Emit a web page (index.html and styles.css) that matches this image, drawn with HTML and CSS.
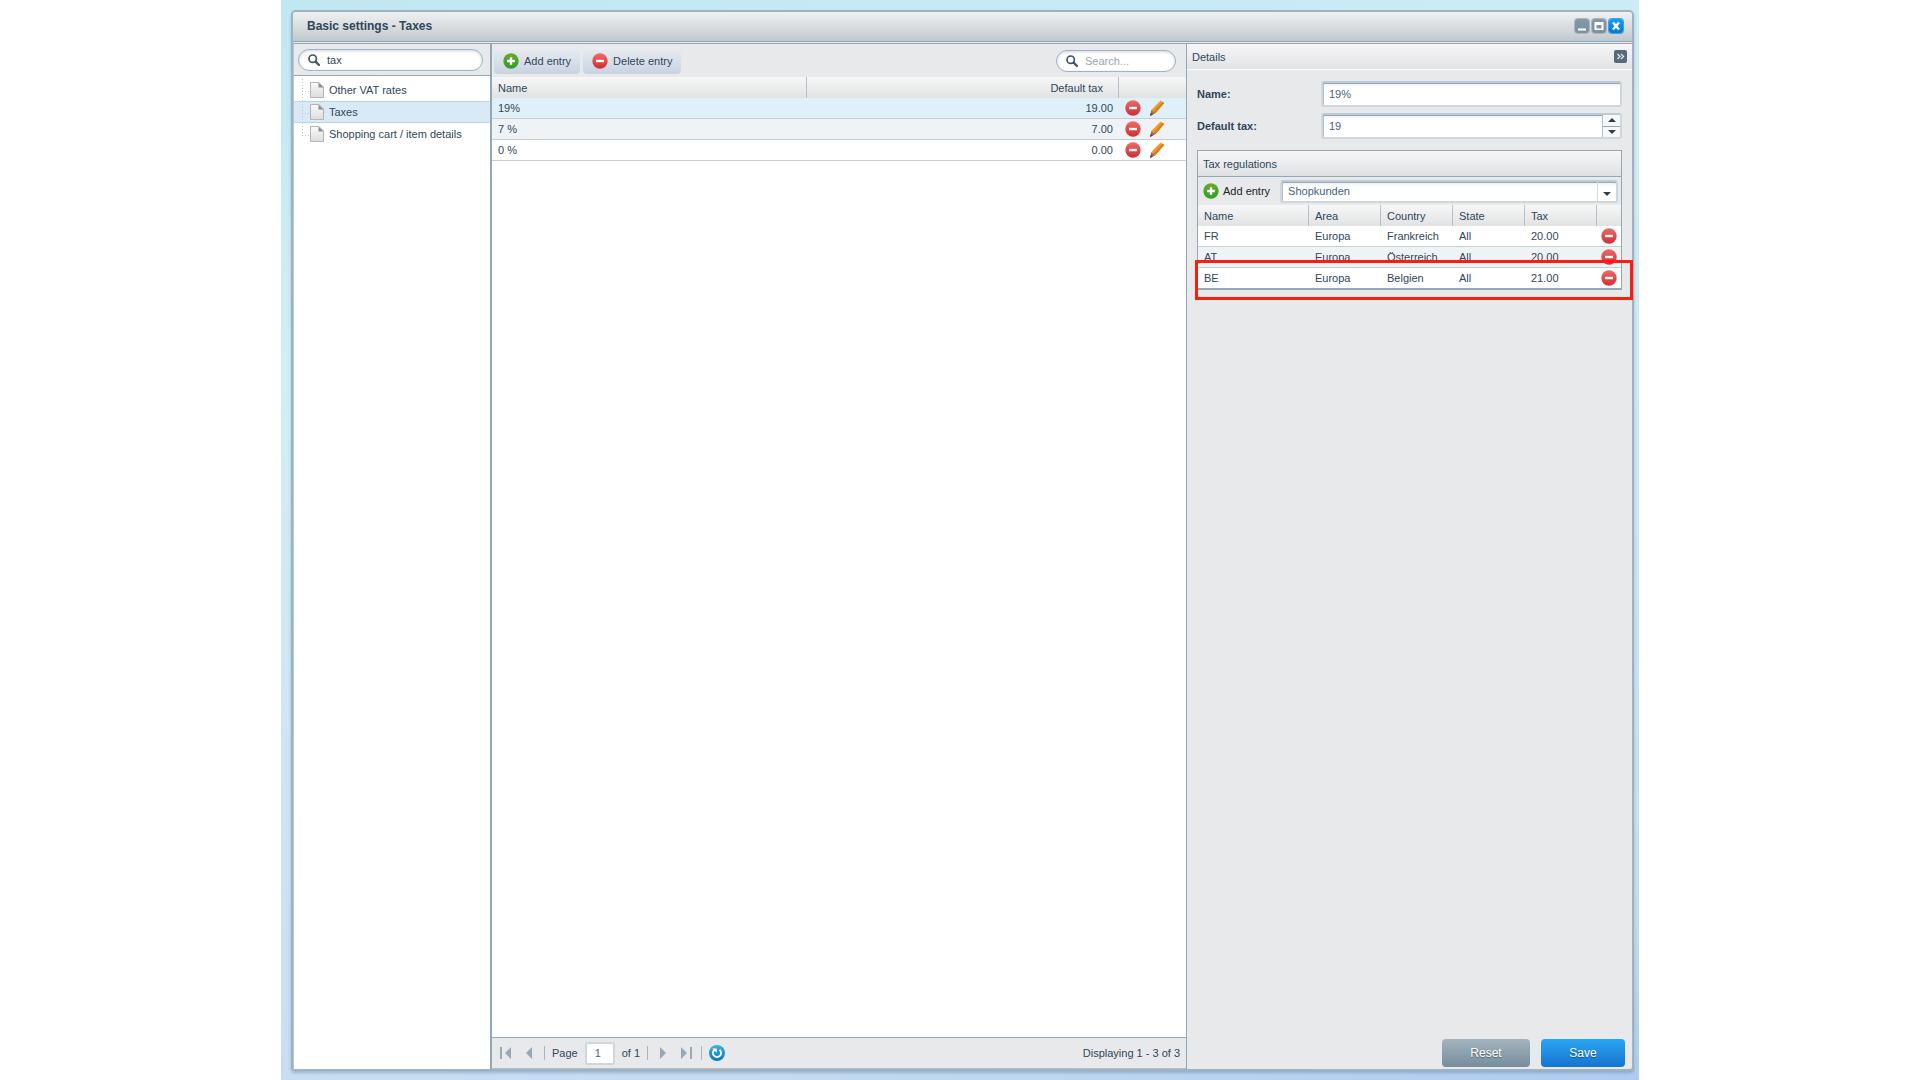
FILE: index.html
```
<!DOCTYPE html>
<html lang="en">
<head>
<meta charset="utf-8">
<title>Basic settings - Taxes</title>
<link rel="stylesheet" href="styles.css">
</head>
<body>
<svg class="defs" width="0" height="0" aria-hidden="true">
  <defs>
    <linearGradient id="g-green" x1="0" y1="0" x2="0" y2="1"><stop offset="0" stop-color="#6cab25"/><stop offset="1" stop-color="#2f9e2c"/></linearGradient>
    <linearGradient id="g-red" x1="0" y1="0" x2="0" y2="1"><stop offset="0" stop-color="#ef6a68"/><stop offset="1" stop-color="#cf2e33"/></linearGradient>
    <linearGradient id="g-page" x1="0" y1="0" x2="0" y2="1"><stop offset="0" stop-color="#fafafa"/><stop offset="1" stop-color="#dcdcdc"/></linearGradient>
    <linearGradient id="g-blue" x1="0" y1="0" x2="0" y2="1"><stop offset="0" stop-color="#3bb0e8"/><stop offset="1" stop-color="#0a76c0"/></linearGradient>
    <symbol id="i-plus" viewBox="0 0 16 16"><circle cx="8" cy="8" r="7.7" fill="url(#g-green)"/><path d="M8 4.2v7.600M4.200 8h7.600" stroke="#fff" stroke-width="2.400"/></symbol>
    <symbol id="i-minus" viewBox="0 0 16 16"><circle cx="8" cy="8" r="7.700" fill="url(#g-red)"/><path d="M4 8h8" stroke="#fff" stroke-width="2.400"/></symbol>
    <symbol id="i-pencil" viewBox="0 0 16 16"><path d="M11.600 .4 15.200 3 6.400 13.200 2.300 10.100z" fill="#ee9d2c"/><path d="M13.600 1.800 15.200 3 6.400 13.200 4.400 11.700z" fill="#d97f17"/><path d="M2.300 10.100 6.400 13.200 1 16z" fill="#a8694a"/><path d="M1.700 13 4 14.500 1 16z" fill="#5c3a31"/></symbol>
    <symbol id="i-search" viewBox="0 0 12 12"><circle cx="4.700" cy="4.700" r="3.700" fill="none" stroke="#3f5566" stroke-width="1.700"/><path d="M7.600 7.600 11 11" stroke="#3f5566" stroke-width="2.200" stroke-linecap="round"/></symbol>
    <symbol id="i-page" viewBox="0 0 14 16"><path d="M.5.5h8.500L13.500 5v10.500H.5z" fill="url(#g-page)" stroke="#b4b4b4"/><path d="M8.500.5 13.500 5.500h-5z" fill="#8d8d8d"/></symbol>
  </defs>
</svg>
<main class="desktop">
  <section class="window">
    <header class="titlebar">
      <h1 class="title">Basic settings - Taxes</h1>
      <div class="tools">
        <button class="tool" type="button" aria-label="Minimize"><svg viewBox="0 0 14 14"><path d="M3 10.500h8" stroke="#fff" stroke-width="2"/></svg></button>
        <button class="tool" type="button" aria-label="Maximize"><svg viewBox="0 0 14 14"><path d="M2.500 3h9v8h-9z M4.500 6v3.500h5V6z" fill="#fff" fill-rule="evenodd"/></svg></button>
        <button class="tool tool-close" type="button" aria-label="Close"><svg viewBox="0 0 14 14"><path d="M4 3.500l6 7M10 3.500l-6 7" stroke="#fff" stroke-width="2.400"/></svg></button>
      </div>
    </header>
    <div class="body">
      <nav class="sidebar">
        <div class="sidebar-bar">
          <label class="search"><svg class="search-icon"><use href="#i-search"/></svg><input type="text" value="tax" aria-label="Search settings"></label>
        </div>
        <ul class="tree">
          <li class="node"><svg class="page-icon"><use href="#i-page"/></svg><a href="#">Other VAT rates</a></li>
          <li class="node node-active"><svg class="page-icon"><use href="#i-page"/></svg><a href="#">Taxes</a></li>
          <li class="node"><svg class="page-icon"><use href="#i-page"/></svg><a href="#">Shopping cart / item details</a></li>
        </ul>
      </nav>
      <section class="list">
        <div class="toolbar">
          <button class="bar-button" type="button"><svg class="icon"><use href="#i-plus"/></svg>Add entry</button>
          <button class="bar-button" type="button"><svg class="icon"><use href="#i-minus"/></svg>Delete entry</button>
          <label class="search search-list"><svg class="search-icon"><use href="#i-search"/></svg><input type="text" placeholder="Search..." aria-label="Search entries"></label>
        </div>
        <div class="grid-area">
          <table class="grid">
            <colgroup><col><col class="c-tax"><col class="c-actions"></colgroup>
            <thead><tr><th>Name</th><th class="num">Default tax</th><th></th></tr></thead>
            <tbody>
              <tr class="selected"><td>19%</td><td class="num">19.00</td><td class="actions"><div class="acts"><button type="button" aria-label="Delete"><svg class="icon"><use href="#i-minus"/></svg></button><button type="button" aria-label="Edit"><svg class="icon"><use href="#i-pencil"/></svg></button></div></td></tr>
              <tr class="alt"><td>7 %</td><td class="num">7.00</td><td class="actions"><div class="acts"><button type="button" aria-label="Delete"><svg class="icon"><use href="#i-minus"/></svg></button><button type="button" aria-label="Edit"><svg class="icon"><use href="#i-pencil"/></svg></button></div></td></tr>
              <tr><td>0 %</td><td class="num">0.00</td><td class="actions"><div class="acts"><button type="button" aria-label="Delete"><svg class="icon"><use href="#i-minus"/></svg></button><button type="button" aria-label="Edit"><svg class="icon"><use href="#i-pencil"/></svg></button></div></td></tr>
            </tbody>
          </table>
        </div>
        <footer class="pager">
          <button class="page-button" type="button" aria-label="First page"><svg viewBox="0 0 12 12"><path d="M0 0h2v12H0zM11 0v12L5 6z"/></svg></button>
          <button class="page-button" type="button" aria-label="Previous page"><svg viewBox="0 0 12 12"><path d="M9 0v12L3 6z"/></svg></button>
          <span class="sep"></span>
          <label for="page">Page</label>
          <input id="page" class="page-input" type="text" value="1">
          <span class="total">of 1</span>
          <span class="sep"></span>
          <button class="page-button" type="button" aria-label="Next page"><svg viewBox="0 0 12 12"><path d="M3 0v12l6-6z"/></svg></button>
          <button class="page-button" type="button" aria-label="Last page"><svg viewBox="0 0 12 12"><path d="M10 0h2v12h-2zM1 0v12l6-6z"/></svg></button>
          <span class="sep"></span>
          <button class="refresh" type="button" aria-label="Refresh"><svg class="icon" viewBox="0 0 16 16"><circle cx="8" cy="8" r="8" fill="url(#g-blue)"/><path d="M5.500 4.700A4.100 4.100 0 1 0 10.500 4.700" fill="none" stroke="#fff" stroke-width="1.800"/><path d="M3.200 3.400h4.600v4.400z" fill="#fff"/></svg></button>
          <span class="status">Displaying 1 - 3 of 3</span>
        </footer>
      </section>
      <aside class="details">
        <header class="details-head"><h2>Details</h2><button class="collapse" type="button" aria-label="Collapse"><svg viewBox="0 0 13 13"><path d="M3.500 4l2.500 2.500L3.500 9M7 4l2.500 2.500L7 9" fill="none" stroke="#e3eaef" stroke-width="1.300"/></svg></button></header>
        <form class="form">
          <div class="field"><label for="name">Name:</label><div class="box"><input id="name" type="text" value="19%"></div></div>
          <div class="field"><label for="tax">Default tax:</label><div class="box"><input id="tax" type="number" value="19"><span class="spin"><button type="button" aria-label="Increase"><svg viewBox="0 0 8 4"><path d="M0 4h8L4 0z"/></svg></button><button type="button" aria-label="Decrease"><svg viewBox="0 0 8 4"><path d="M0 0h8L4 4z"/></svg></button></span></div></div>
          <section class="rules">
            <h3>Tax regulations</h3>
            <div class="rules-bar">
              <button class="add" type="button"><svg class="icon"><use href="#i-plus"/></svg>Add entry</button>
              <div class="box combo"><select aria-label="Customer group"><option>Shopkunden</option></select><span class="arrow"><svg viewBox="0 0 8 4"><path d="M0 0h8L4 4z"/></svg></span></div>
            </div>
            <table class="grid grid-rules">
              <colgroup><col><col class="c-col"><col class="c-col"><col class="c-col"><col class="c-col"><col class="c-del"></colgroup>
              <thead><tr><th>Name</th><th>Area</th><th>Country</th><th>State</th><th>Tax</th><th></th></tr></thead>
              <tbody>
                <tr><td>FR</td><td>Europa</td><td>Frankreich</td><td>All</td><td>20.00</td><td class="actions"><div class="acts"><button type="button" aria-label="Delete"><svg class="icon"><use href="#i-minus"/></svg></button></div></td></tr>
                <tr class="alt"><td>AT</td><td>Europa</td><td>Österreich</td><td>All</td><td>20.00</td><td class="actions"><div class="acts"><button type="button" aria-label="Delete"><svg class="icon"><use href="#i-minus"/></svg></button></div></td></tr>
                <tr><td>BE</td><td>Europa</td><td>Belgien</td><td>All</td><td>21.00</td><td class="actions"><div class="acts"><button type="button" aria-label="Delete"><svg class="icon"><use href="#i-minus"/></svg></button></div></td></tr>
              </tbody>
            </table>
            <div class="marker"></div>
          </section>
        </form>
        <footer class="buttons"><button class="btn" type="button">Reset</button><button class="btn btn-primary" type="button">Save</button></footer>
      </aside>
    </div>
  </section>
</main>
</body>
</html>
```
FILE: styles.css
```
* { box-sizing: border-box; }
body { margin: 0; background: #fff; color: #30475a; font: 11px/14px "Liberation Sans", Arial, sans-serif; }
button, input, select { font: inherit; color: inherit; margin: 0; padding: 0; border: 0; background: none; outline: 0; }
button { cursor: pointer; }
h1, h2, h3, ul { margin: 0; padding: 0; font: inherit; list-style: none; }
a { color: inherit; text-decoration: none; }
svg { display: block; }
.defs { position: absolute; }
.icon { width: 16px; height: 16px; flex: none; }

.desktop { max-width: 1358px; height: 100vh; margin: 0 auto; padding: 10px 5px 9px 10px; display: flex; background: linear-gradient(170deg, #c1e7f3 0%, #d2eef6 28%, #cbe4f3 65%, #c3dcf1 88%, #afcbee 100%); }
.window { flex: 1; min-width: 0; display: flex; flex-direction: column; border: 2px solid #9fb2c0; border-radius: 5px 5px 4px 4px; background: #e7e9eb; box-shadow: 0 2px 3px rgba(70, 110, 150, .35); }
.titlebar { flex: none; height: 30px; padding: 0 9px 2px 14px; display: flex; align-items: center; justify-content: space-between; background: linear-gradient(#eff1f1, #dcdfe1 45%, #c0c8ce); border-bottom: 1px solid #93a7b4; border-radius: 3px 3px 0 0; }
.title { font-size: 12px; font-weight: bold; }
.tools { display: flex; gap: 3px; }
.tool { width: 14px; height: 14px; border-radius: 3px; background: linear-gradient(#8398a7, #7c91a0); box-shadow: 0 0 0 1px #a9b7c1; }
.tool-close { background: linear-gradient(#14a0f8, #0478d6); box-shadow: 0 0 0 1px #3f9fe0; }
.body { flex: 1; min-height: 0; display: flex; margin-top: 1px; border-top: 1px solid #93a7b4; }

.sidebar { flex: none; width: 199px; display: flex; flex-direction: column; background: #fff; border-left: 1px solid #b9c6d0; border-right: 2px solid #93a7b4; }
.sidebar-bar { height: 32px; padding: 5px 7px 0 4px; background: #e7e9eb; border-bottom: 1px solid #93a7b4; }
.search { height: 22px; padding: 0 9px; display: flex; align-items: center; gap: 7px; background: #fff; border: 1px solid #9eb3c6; border-radius: 11px; box-shadow: inset 0 1px 3px #cfd6dc; }
.search-icon { width: 12px; height: 12px; flex: none; }
.search input { width: 100%; min-width: 0; }
.search input::placeholder { color: #98a6b1; opacity: 1; }
.tree { padding-top: 3px; }
.node { height: 22px; padding-left: 16px; display: flex; align-items: center; gap: 5px; background: repeating-linear-gradient(#c4c4c4 0 1px, transparent 1px 3px) 8px 0 / 1px 100% no-repeat, repeating-linear-gradient(90deg, #c4c4c4 0 1px, transparent 1px 3px) 8px 12px / 7px 1px no-repeat; }
.node:last-child { background-size: 1px 12px, 7px 1px; }
.node-active { background-color: #d9eaf6; box-shadow: inset 0 1px #b9d3e8, inset 0 -1px #b9d3e8; }
.page-icon { width: 14px; height: 16px; flex: none; }

.list { flex: 1; min-width: 0; display: flex; flex-direction: column; }
.toolbar { flex: none; height: 33px; padding: 0 10px 0 2px; display: flex; align-items: center; gap: 3px; }
.bar-button { height: 27px; padding: 0 9px; display: flex; align-items: center; gap: 5px; border-radius: 4px; background: linear-gradient(#eaedf1, #c8d3e2); }
.search-list { width: 120px; margin-left: auto; }
.grid-area { flex: 1; min-height: 0; background: #fff; }
.grid { width: 100%; table-layout: fixed; border-collapse: separate; border-spacing: 0; background: #fff; }
.c-tax { width: 45%; }
.c-actions { width: 67px; }
.c-col { width: 72px; }
.c-del { width: 24px; }
.grid th { height: 21px; padding: 0 6px; font-weight: normal; text-align: left; background: linear-gradient(#f7f7f7, #e1e2e3); border-right: 1px solid #b3c0ca; }
.grid th:last-child { border-right: 0; }
.grid td { height: 21px; padding: 0 6px; border-bottom: 1px solid #c3ced6; }
.grid th.num { text-align: right; padding-right: 15px; }
.grid td.num { text-align: right; padding-right: 6px; }
.selected td { background: #e0f0f8; }
.alt td { background: #f0f3f6; }
.grid td.actions { padding: 0 6px; }
.acts { display: flex; gap: 8px; }
.pager { flex: none; height: 32px; padding: 0 6px 0 6px; display: flex; align-items: center; gap: 7px; border-top: 1px solid #93a7b4; border-bottom: 1px solid #b3c0ca; }
.page-button { width: 16px; height: 12px; padding: 0 2px; }
.page-button svg { width: 12px; height: 12px; fill: #9aa8b4; }
.sep { width: 1px; height: 14px; background: #a9b5bf; }
.page-input { width: 30px; height: 23px; padding-left: 8px; color: #46627b; background: #fff; border: 2px solid #cfd6dc; border-radius: 3px; }
.status { margin-left: auto; }

.details { flex: none; width: 446px; display: flex; flex-direction: column; border-left: 1px solid #93a7b4; }
.details-head { height: 26px; padding: 0 5px; display: flex; align-items: center; justify-content: space-between; background: linear-gradient(#f6f6f7, #e2e3e5); border-bottom: 1px solid #fbfbfb; }
.collapse { width: 13px; height: 13px; border-radius: 2px; background: #566a79; }
.form { flex: 1; padding: 11px 10px 0; }
.field { display: flex; align-items: center; margin-bottom: 6px; }
.field label { flex: none; width: 124px; font-weight: bold; }
.box { flex: 1; min-width: 0; height: 26px; display: flex; border: 2px solid #cfd6dc; border-top-color: #c0cad2; border-radius: 3px; background: linear-gradient(#eceeef, #fff 5px); box-shadow: inset 0 1px #93a7b4, inset 1px 0 #b3c0ca; }
.box input { flex: 1; min-width: 0; padding-left: 6px; color: #46627b; appearance: textfield; }
.box input::-webkit-inner-spin-button { appearance: none; margin: 0; }
.spin { flex: none; width: 18px; display: flex; flex-direction: column; border-left: 1px solid #b3c0ca; }
.spin button { flex: 1; display: flex; align-items: center; justify-content: center; background: #f6f7f8; }
.spin button + button { border-top: 1px solid #93a7b4; }
.spin svg, .arrow svg { width: 8px; height: 4px; fill: #2f404d; }
.rules { position: relative; margin-top: 11px; border: 1px solid #93a7b4; }
.rules h3 { height: 26px; padding: 6px 5px 0; background: linear-gradient(#f6f6f7, #e0e1e3); border-bottom: 1px solid #93a7b4; }
.rules-bar { height: 28px; padding: 0 3px 0 5px; display: flex; align-items: center; gap: 10px; }
.add { display: flex; align-items: center; gap: 4px; color: #222; }
.combo { height: 23px; }
.combo select { flex: 1; min-width: 0; padding-left: 6px; color: #46627b; appearance: none; }
.arrow { flex: none; width: 19px; display: flex; align-items: center; justify-content: center; padding-top: 5px; border-left: 1px solid #d7dee3; }
.grid-rules { border-bottom: 1px solid #93a7b4; }
.grid-rules tr:last-child td { height: 20px; border-bottom: 0; }
.grid-rules td.actions { padding: 0 4px; }
.marker { position: absolute; left: -3px; right: -12px; top: 109px; height: 40px; border: 3px solid #fa1e0e; pointer-events: none; }
.buttons { padding: 0 7px 2px; display: flex; justify-content: flex-end; gap: 11px; }
.btn { width: 88px; height: 28px; border-radius: 4px; font-size: 12px; color: #fff; text-shadow: 0 1px 1px rgba(0, 0, 0, .4); background: linear-gradient(#a4b3be, #758e9d); }
.btn-primary { width: 84px; background: linear-gradient(#29a5f5, #1673d0); }
```
